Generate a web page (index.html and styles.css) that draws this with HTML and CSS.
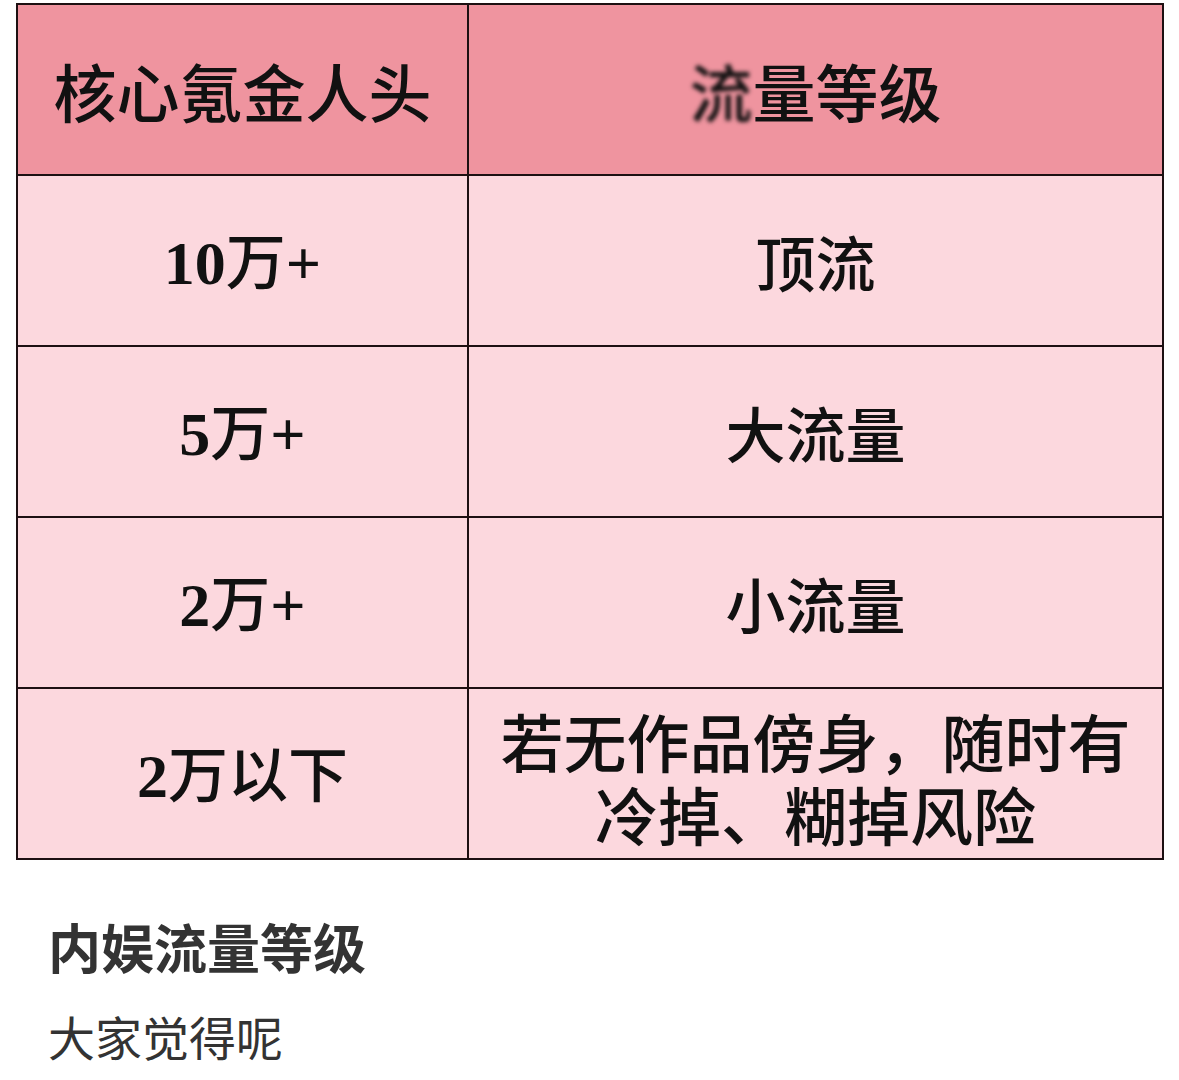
FILE: index.html
```html
<!DOCTYPE html>
<html lang="zh-CN">
<head>
<meta charset="utf-8">
<link rel="stylesheet" href="styles.css">
</head>
<body>
<div class="page">
  <table class="grade">
    <colgroup><col class="c1"><col class="c2"></colgroup>
    <thead>
      <tr><th>核心氪金人头</th><th><span class="blur">流</span>量等级</th></tr>
    </thead>
    <tbody>
      <tr><td><span class="num">10</span>万<span class="num">+</span></td><td>顶流</td></tr>
      <tr><td><span class="num">5</span>万<span class="num">+</span></td><td>大流量</td></tr>
      <tr><td><span class="num">2</span>万<span class="num">+</span></td><td>小流量</td></tr>
      <tr><td><span class="num">2</span>万以下</td><td class="two"><span class="ln">若无作品傍身，随时有</span><span class="ln">冷掉、糊掉风险</span></td></tr>
    </tbody>
  </table>
  <div class="caption">
    <h1 class="title">内娱流量等级</h1>
    <p class="sub">大家觉得呢</p>
  </div>
</div>
</body>
</html>
```

FILE: styles.css
```css
html, body {
  margin: 0;
  padding: 0;
  background: #ffffff;
}
.page {
  padding: 3px 0 0 16px;
}
.grade {
  border-collapse: collapse;
  width: 1146px;
  table-layout: fixed;
  font-family: "Noto Sans CJK SC", sans-serif;
  font-weight: 500;
  color: #111;
  border: 2px solid #1d1012;
}
.c1 { width: 451px; }
.c2 { width: 695px; }
.grade th, .grade td {
  border: 2px solid #1d1012;
  text-align: center;
  vertical-align: middle;
  padding: 0;
  height: 169px;
  font-size: 60px;
  line-height: 72px;
}
.grade th {
  background: #ef949f;
  font-weight: 500;
  font-size: 63px;
}
.grade td {
  background: #fcd8de;
}
.grade td.two {
  font-size: 63px;
  line-height: 73px;
  padding-top: 4px;
  height: 165px;
}
.ln {
  display: block;
  height: 73px;
}
.num {
  font-family: "Liberation Serif", serif;
  font-weight: 700;
  font-size: 62px;
}
.blur {
  filter: blur(2px);
}
.caption {
  padding: 56px 0 0 32px;
  font-family: "Noto Sans CJK SC", sans-serif;
  color: #333333;
}
.title {
  margin: 0;
  font-size: 53px;
  line-height: 60px;
  font-weight: 700;
}
.sub {
  margin: 30px 0 0 0;
  font-size: 47px;
  line-height: 60px;
  font-weight: 400;
}
```
